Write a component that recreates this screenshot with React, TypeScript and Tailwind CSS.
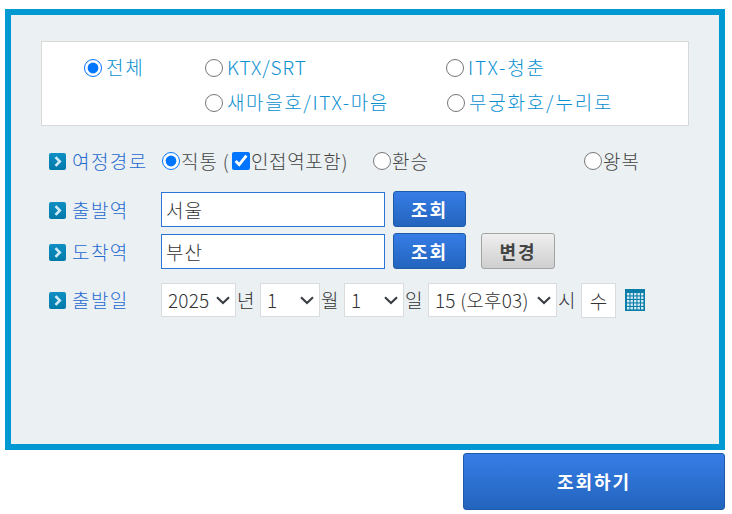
const font = { fontFamily: '"Noto Sans CJK KR", "Noto Sans", sans-serif' };

function Arrow() {
  return (
    <svg width="17" height="17" viewBox="0 0 17 17" className="shrink-0">
      <defs>
        <linearGradient id="arrowBg" x1="0" y1="0" x2="0" y2="1">
          <stop offset="0" stopColor="#0f8fc4" />
          <stop offset="1" stopColor="#0079a8" />
        </linearGradient>
      </defs>
      <rect width="17" height="17" rx="2" fill="url(#arrowBg)" />
      <path d="M6.5 4.2 L10.8 8.5 L6.5 12.8" fill="none" stroke="#cfeaf5" strokeWidth="2.6" />
    </svg>
  );
}

function Radio({ checked, name }: { checked?: boolean; name: string }) {
  return <input type="radio" name={name} defaultChecked={checked} className="w-[18px] h-[18px] m-0 shrink-0" />;
}

function TrainOption({ label, checked, className }: { label: string; checked?: boolean; className?: string }) {
  return (
    <label className={`flex items-center gap-[4px] text-[19px] font-light text-[#0a90d0] ${className ?? ""}`}>
      <Radio name="train" checked={checked} />
      <span>{label}</span>
    </label>
  );
}

function RowLabel({ label, className }: { label: string; className?: string }) {
  return (
    <div className={`flex items-center w-[120px] shrink-0 gap-[6px] pl-[8px] text-[19px] font-light tracking-[1.4px] text-[#2468d0] ${className ?? ""}`}>
      <Arrow />
      <span>{label}</span>
    </div>
  );
}

function BlueButton({ label }: { label: string }) {
  return (
    <button className="w-[73px] h-[36px] rounded-[3px] border border-[#1d5ba8] bg-gradient-to-b from-[#367de6] to-[#2364bd] text-white text-[18px] font-bold tracking-[2px]">
      {label}
    </button>
  );
}

function DateSelect({ value, options, className }: { value: string; options: string[]; className: string }) {
  return (
    <div className={`relative h-[34px] shrink-0 ${className}`}>
      <select
        defaultValue={value}
        className="appearance-none w-full h-full border border-[#d9dcde] bg-white text-[#333] text-[19px] font-light tracking-[0.2px] pl-[6px]"
      >
        {options.map((o) => (
          <option key={o}>{o}</option>
        ))}
      </select>
      <svg width="14" height="9" viewBox="0 0 14 9" className="absolute right-[6px] top-[13px] pointer-events-none">
        <path d="M1 1.2 L7 7 L13 1.2" fill="none" stroke="#3a3f45" strokeWidth="2.2" />
      </svg>
    </div>
  );
}

function Unit({ label }: { label: string }) {
  return <span className="w-[24px] pl-[1px] text-[19px] font-light text-[#333] text-left">{label}</span>;
}

export default function App() {
  return (
    <div style={font} className="w-[732px] h-[514px] bg-white pl-[5px] pt-[9px] overflow-hidden">
      <div className="w-[720px] h-[441px] border-[6px] border-[#0099d1] bg-[#ebf0f3] pl-[30px] pt-[26px] pr-[30px]">
        <div className="w-[648px] h-[85px] border border-[#d9d9d9] bg-white pl-[42px] pt-[8px] grid grid-cols-[120px_242px_1fr] grid-rows-[35px_35px] items-center">
          <TrainOption label="전체" checked className="tracking-[1.8px]" />
          <TrainOption label="KTX/SRT" className="ml-[1px] tracking-[0.9px]" />
          <TrainOption label="ITX-청춘" className="tracking-[1.8px]" />
          <div />
          <TrainOption label="새마을호/ITX-마음" className="ml-[1px] tracking-[1.6px]" />
          <TrainOption label="무궁화호/누리로" className="ml-[1px] tracking-[1.8px]" />
        </div>

        <div className="flex items-center mt-[20px] h-[30px]">
          <RowLabel label="여정경로" />
          <div className="flex items-center text-[19px] font-light tracking-[0.9px] text-[#444] pl-[1px]">
            <label className="flex items-center gap-[1px] w-[70px] shrink-0">
              <Radio name="route" checked />
              <span>직통 (</span>
            </label>
            <label className="flex items-center gap-[1px] w-[141px] shrink-0">
              <input type="checkbox" defaultChecked className="w-[18px] h-[18px] m-0" />
              <span className="tracking-[0.6px]">인접역포함)</span>
            </label>
            <label className="flex items-center gap-[1px] w-[211px] shrink-0">
              <Radio name="route" />
              <span>환승</span>
            </label>
            <label className="flex items-center gap-[1px]">
              <Radio name="route" />
              <span>왕복</span>
            </label>
          </div>
        </div>

        <div className="flex items-center mt-[15px] h-[36px]">
          <RowLabel label="출발역" className="pt-[2px]" />
          <input defaultValue="서울" className="w-[224px] h-[35px] border border-[#2a76d8] bg-white px-[4px] text-[19px] font-light tracking-[1px] text-[#333]" />
          <div className="ml-[8px]">
            <BlueButton label="조회" />
          </div>
        </div>

        <div className="flex items-center mt-[6px] h-[36px]">
          <RowLabel label="도착역" className="pt-[3px]" />
          <input defaultValue="부산" className="w-[224px] h-[35px] border border-[#2a76d8] bg-white px-[4px] text-[19px] font-light tracking-[1px] text-[#333]" />
          <div className="ml-[8px]">
            <BlueButton label="조회" />
          </div>
          <button className="ml-[15px] w-[74px] h-[36px] rounded-[3px] border border-[#a3a3a3] bg-gradient-to-b from-[#efefef] to-[#cfcfcf] text-[#444] text-[18px] font-bold tracking-[2px]">
            변경
          </button>
        </div>

        <div className="flex items-center mt-[13px] h-[36px]">
          <RowLabel label="출발일" />
          <DateSelect value="2025" options={["2025", "2026"]} className="w-[75px]" />
          <Unit label="년" />
          <DateSelect value="1" options={["1", "2", "3"]} className="w-[60px]" />
          <Unit label="월" />
          <DateSelect value="1" options={["1", "2", "3"]} className="w-[60px]" />
          <Unit label="일" />
          <DateSelect value="15 (오후03)" options={["15 (오후03)", "16 (오후04)"]} className="w-[129px]" />
          <Unit label="시" />
          <input defaultValue="수" className="w-[35px] h-[35px] border border-[#d9dcde] bg-white text-center text-[19px] font-light text-[#333]" />
          <svg width="20" height="22" viewBox="0 0 20 22" className="ml-[9px]">
            <rect width="20" height="22" fill="#0a7ea8" />
            {[4, 7.5, 11, 14.5, 18].map((y) =>
              [2, 5.5, 9, 12.5, 16].map((x) => (
                <rect key={`${x}-${y}`} x={x} y={y} width="2.4" height="2.4" fill="#d4ecf5" />
              ))
            )}
          </svg>
        </div>
      </div>

      <div className="flex justify-end w-[720px] mt-[3px]">
        <button className="w-[262px] h-[57px] rounded-[3px] border border-[#1d5ba8] bg-gradient-to-b from-[#367de6] to-[#2364bd] text-white text-[18px] font-bold tracking-[2px]">
          조회하기
        </button>
      </div>
    </div>
  );
}
